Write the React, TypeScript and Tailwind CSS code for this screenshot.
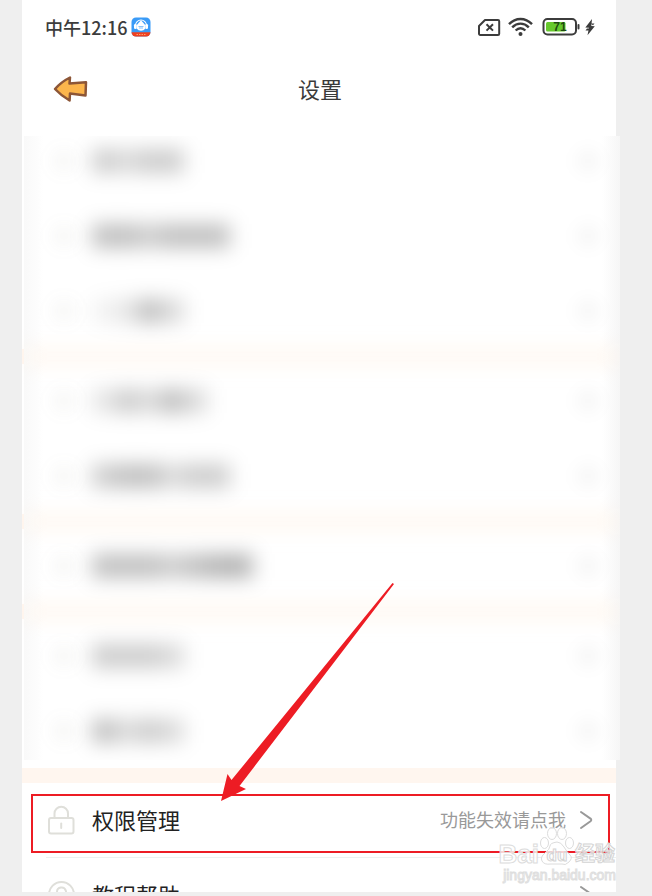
import type { ReactNode } from "react";

// shade of each blurred character, row by row
const hiddenGroups = [
    [
        ["bg-black/20", "bg-black/15", "bg-black/20", "bg-black/20"],
        ["bg-black/25", "bg-black/25", "bg-black/20", "bg-black/25", "bg-black/25", "bg-black/25"],
        ["bg-black/5", "bg-black/10", "bg-black/25", "bg-black/15"],
    ],
    [
        ["bg-black/10", "bg-black/20", "bg-black/15", "bg-black/25", "bg-black/15"],
        ["bg-black/20", "bg-black/25", "bg-black/25", "bg-black/15", "bg-black/20", "bg-black/20"],
    ],
    [
        ["bg-black/25", "bg-black/25", "bg-black/25", "bg-black/20", "bg-black/25", "bg-black/30", "bg-black/30"],
    ],
    [
        ["bg-black/20", "bg-black/20", "bg-black/20", "bg-black/15"],
        ["bg-black/25", "bg-black/15", "bg-black/20", "bg-black/15"],
    ],
];

function HiddenRow({ shades }: { shades: string[] }) {
    return (
        <div className="flex h-[75px] items-center border-l-2 border-white pb-0.5 pl-7 pr-5">
            <div className="h-6 w-6 rounded-full bg-[#77775a]/5 blur-[8px]" />
            <div className="ml-4 flex blur-[10px]">
                {shades.map((shade, i) => (
                    <div key={i} className={`h-6 w-[23px] ${shade}`} />
                ))}
            </div>
            <div className="ml-auto h-6 w-6 rounded-full bg-black/3 blur-[8px]" />
        </div>
    );
}

function HiddenBand() {
    return (
        <div className="h-[15px] border-l-2 border-[#fff6ef]">
            <div className="h-[15px] bg-[#fff3e8]/70 blur-[10px]" />
        </div>
    );
}

function Chevron() {
    return (
        <svg className="ml-3 h-5 w-4" viewBox="0 0 16 20" fill="none" stroke="#999" strokeWidth="2" strokeLinecap="round" strokeLinejoin="round">
            <path d="M3 2 L12.5 8.6 Q14 10 12.5 11.2 L3 18" />
        </svg>
    );
}

function SettingRow({ icon, label, hint }: { icon: ReactNode; label: string; hint?: string }) {
    return (
        <button type="button" className="flex h-[75px] w-full items-center pb-0.5 pl-6 pr-[22px] text-left">
            {icon}
            <span className="ml-4 pb-0.5 text-[22px] leading-8 text-[#222]">{label}</span>
            <span className="ml-auto pb-0.5 text-[18px] leading-6 text-[#999]">{hint}</span>
            <Chevron />
        </button>
    );
}

function LockIcon() {
    return (
        <svg className="h-[30px] w-[30px]" viewBox="0 0 30 30" fill="none" stroke="#dfdfda" strokeWidth="2" strokeLinecap="round">
            <rect x="3" y="13" width="24.5" height="15.5" rx="2" />
            <path d="M8.5 13V8.5a6.5 6.5 0 0 1 13.5 0V13" />
            <path d="M15.2 18.5v4.5" />
        </svg>
    );
}

function HelpIcon() {
    return (
        <svg className="h-[30px] w-[30px]" viewBox="0 0 30 30" fill="none" stroke="#dfdfda" strokeWidth="2" strokeLinecap="round">
            <circle cx="15.5" cy="14.5" r="12.5" />
            <path d="M11 12a4.5 4.5 0 1 1 6.5 4q-2 1-2 3" />
            <path d="M15.5 22v.5" />
        </svg>
    );
}

function StatusBar() {
    return (
        <div className="flex h-[54px] items-center pl-[23px] pr-5 text-[#3c3c3c]">
            <span className="text-[18px] font-medium leading-6">中午12:16</span>
            <svg className="ml-1 h-5 w-5" viewBox="0 0 20 20">
                <defs>
                    <clipPath id="app">
                        <rect x=".5" y=".5" width="19" height="19" rx="4.5" />
                    </clipPath>
                </defs>
                <g clipPath="url(#app)">
                    <rect width="20" height="20" fill="#3a9bf7" />
                    <path d="M0 15.3h20V20H0z" fill="#f0401f" />
                    <path d="M4.5 8.5a5.5 5.5 0 0 1 11 0" fill="none" stroke="#fff" strokeWidth="1.1" />
                    <rect x="3" y="7" width="2.6" height="5" rx="1.2" fill="#fff" />
                    <rect x="14.4" y="7" width="2.6" height="5" rx="1.2" fill="#fff" />
                    <path d="M10 3.2 12.5 6 14.5 8.5v3q-2 2.2-4.5 2.2T5.5 11.5v-3L7.5 6z" fill="#fff" />
                    <path d="M7.5 9.5h5M8 11h4" stroke="#3a9bf7" strokeWidth=".6" />
                    <path d="M5.5 17.5h9" stroke="#ff9c6b" strokeWidth="1.2" strokeDasharray="1.5 1" />
                </g>
            </svg>
            <svg className="ml-auto h-5 w-6" viewBox="0 0 24 20" fill="none" stroke="currentColor" strokeWidth="2">
                <path d="M8 3H21a1.2 1.2 0 0 1 1.2 1.2V16.8a1.2 1.2 0 0 1-1.2 1.2H3.2A1.2 1.2 0 0 1 2 16.8V9z" strokeLinejoin="round" />
                <path d="M9.5 7.2l6.5 6.4M16 7.2l-6.5 6.4" />
            </svg>
            <svg className="ml-1.5 h-5 w-[27px]" viewBox="0 0 27 20" fill="none" stroke="currentColor" strokeWidth="2.4">
                <path d="M2 7.2Q7 2 13.5 2T25 7.2" />
                <path d="M5.2 10.4Q9 6.6 13.5 6.6T21.8 10.4" />
                <path d="M8.6 13.5Q11 11.2 13.5 11.2T18.4 13.5" />
                <circle cx="13.5" cy="17" r="2" fill="currentColor" stroke="none" />
            </svg>
            <svg className="ml-2 h-5 w-[38px]" viewBox="0 0 38 20">
                <rect x="1.5" y="2" width="32.5" height="15.5" rx="4" fill="#fff" stroke="currentColor" strokeWidth="2" />
                <rect x="4" y="5" width="19.5" height="9.5" rx="1.5" fill="#66c92c" />
                <rect x="35.5" y="7" width="2" height="5.5" rx="1" fill="currentColor" />
                <text x="18" y="14" textAnchor="middle" fontSize="12" fontWeight="700" fill="#1f4a10" fontFamily="Liberation Sans, sans-serif">71</text>
            </svg>
            <svg className="ml-1 h-[18px] w-3" viewBox="0 0 12 18" fill="currentColor">
                <path d="M8 1 1.3 9.6 5 9.8 3.5 17.3 10.8 8.2 7.3 8z" />
                <path d="M6.5 5.4h4l-1.5 1.8zM1.5 12.4h4l1-1.8H3z" />
            </svg>
        </div>
    );
}

function Header() {
    return (
        <header className="grid h-[70px] grid-cols-3 items-center pl-[30px] pr-7">
            <button type="button" aria-label="返回" className="w-9">
                <svg className="h-7 w-9" viewBox="0 0 36 28" fill="#fcb54c" stroke="#8d5637" strokeWidth="2.5" strokeLinejoin="round">
                    <path d="M3 14Q9 7 18 2.5L17.5 8.5 34 7.3 33.5 20.5 18 18.5 17.6 25.5Q9 20.5 3 14z" />
                </svg>
            </button>
            <h1 className="pb-0.5 text-center text-[22px] leading-8 text-[#3a3a3a]">设置</h1>
        </header>
    );
}

// long tapered pointer ending on the highlighted row
function Pointer() {
    return (
        <svg className="pointer-events-none absolute -top-[201px] left-[198px] h-[220px] w-[176px]" viewBox="0 0 176 220" fill="#ed1c24">
            <path d="M1 219 7.5 192 11.5 198 172.5 1 174 2 19.5 204 26 207z" />
        </svg>
    );
}

function Watermark() {
    return (
        <div className="pointer-events-none absolute bottom-2 right-0 flex flex-col items-end font-['Liberation_Sans','Noto_Sans_CJK_SC',sans-serif] text-white/80">
            <div className="flex items-end pr-px">
                <span className="text-[26px] font-bold leading-6 [-webkit-text-stroke:1px_#dcdcdc]">Bai</span>
                <svg className="h-[40px] w-9" viewBox="0 0 36 40" fill="#fff" fillOpacity=".8" stroke="#dcdcdc">
                    <ellipse cx="5.5" cy="17" rx="4" ry="5.5" />
                    <ellipse cx="13" cy="7.5" rx="4.5" ry="6" />
                    <ellipse cx="23" cy="7.5" rx="4.5" ry="6" />
                    <ellipse cx="30.5" cy="17" rx="4" ry="5.5" />
                    <path d="M18 16q4 0 7 5t6 8-1 7-7 2H12q-7 1-9-3t3-8 5-7 7-4z" />
                    <text x="18" y="35" textAnchor="middle" fontSize="17" fontWeight="700" fill="#fff" stroke="#d4d4d4">du</text>
                </svg>
                <span className="text-[20px] font-bold leading-6 [-webkit-text-stroke:1px_#d4d4d4]">经验</span>
            </div>
            <span className="text-[14px] leading-[18px] [-webkit-text-stroke:1px_#dedede]">jingyan.baidu.com</span>
        </div>
    );
}

function App() {
    return (
        <div className="h-screen bg-[#efefef] pb-1 pl-[22px] pr-9 font-['Noto_Sans_CJK_SC',sans-serif]">
            <main className="relative h-full bg-white [clip-path:inset(0_-4px_0_0)]">
                <StatusBar />
                <Header />
                <section className="-mr-1 h-[636px] pt-3">
                    <div className="h-[624px] overflow-hidden bg-white bg-[linear-gradient(90deg,#fff_2px,#f9f9f9_2px,transparent_22px,transparent_calc(100%-18px),#f6f6f6)]">
                        <div className="-mt-3">
                            {hiddenGroups.map((rows, i) => (
                                <div key={i}>
                                    {i > 0 && <HiddenBand />}
                                    {rows.map((shades, j) => (
                                        <HiddenRow key={j} shades={shades} />
                                    ))}
                                </div>
                            ))}
                        </div>
                    </div>
                </section>
                <div className="mt-2 h-[15px] bg-[#fff6ef]" />
                <div className="relative">
                    <SettingRow icon={<LockIcon />} label="权限管理" hint="功能失效请点我" />
                    <div className="pointer-events-none absolute bottom-[5px] left-[9px] right-[6px] top-[11px] border-2 border-[#ed1c24]" />
                    <Pointer />
                </div>
                <div className="-mt-px ml-6 h-px bg-[#edf1f0]" />
                <SettingRow icon={<HelpIcon />} label="教程帮助" />
                <Watermark />
            </main>
        </div>
    );
}

export default App;
